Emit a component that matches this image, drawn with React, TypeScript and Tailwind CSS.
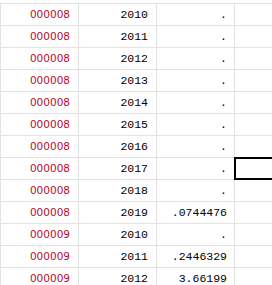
const rows: [string, string, string][] = [
  ["000008", "2010", "."],
  ["000008", "2011", "."],
  ["000008", "2012", "."],
  ["000008", "2013", "."],
  ["000008", "2014", "."],
  ["000008", "2015", "."],
  ["000008", "2016", "."],
  ["000008", "2017", "."],
  ["000008", "2018", "."],
  ["000008", "2019", ".0744476"],
  ["000009", "2010", "."],
  ["000009", "2011", ".2446329"],
  ["000009", "2012", "3.66199"],
];

export default function App() {
  return (
    <div className="w-[272px] h-[285px] overflow-hidden bg-white pt-[3px]">
      <div className="border-t border-[#e2e2e2]">
        {rows.map(([id, year, value], i) => (
          <div key={i} className="flex h-[22px] border-b border-[#e2e2e2]">
            <div
              className="w-[79px] shrink-0 border-l border-r border-[#e2e2e2] flex items-center justify-end pr-[8px] text-[10.5px] text-[#b0102c]"
              style={{ fontFamily: '"DejaVu Sans", Verdana, sans-serif' }}
            >
              {id}
            </div>
            <div
              className="w-[78px] shrink-0 border-r border-[#e2e2e2] flex items-center justify-end pr-[8px] text-[11.5px] text-black"
              style={{ fontFamily: '"Liberation Mono", monospace' }}
            >
              {year}
            </div>
            <div
              className="w-[78px] shrink-0 border-r border-[#e2e2e2] flex items-center justify-end pr-[7px] text-[11.5px] text-black"
              style={{ fontFamily: '"Liberation Mono", monospace' }}
            >
              {value}
            </div>
            <div className="flex-1 relative">
              {i === 7 && (
                <div className="absolute -left-[1px] -top-[1px] -bottom-[1px] w-[60px] border-2 border-black" />
              )}
            </div>
          </div>
        ))}
      </div>
    </div>
  );
}
